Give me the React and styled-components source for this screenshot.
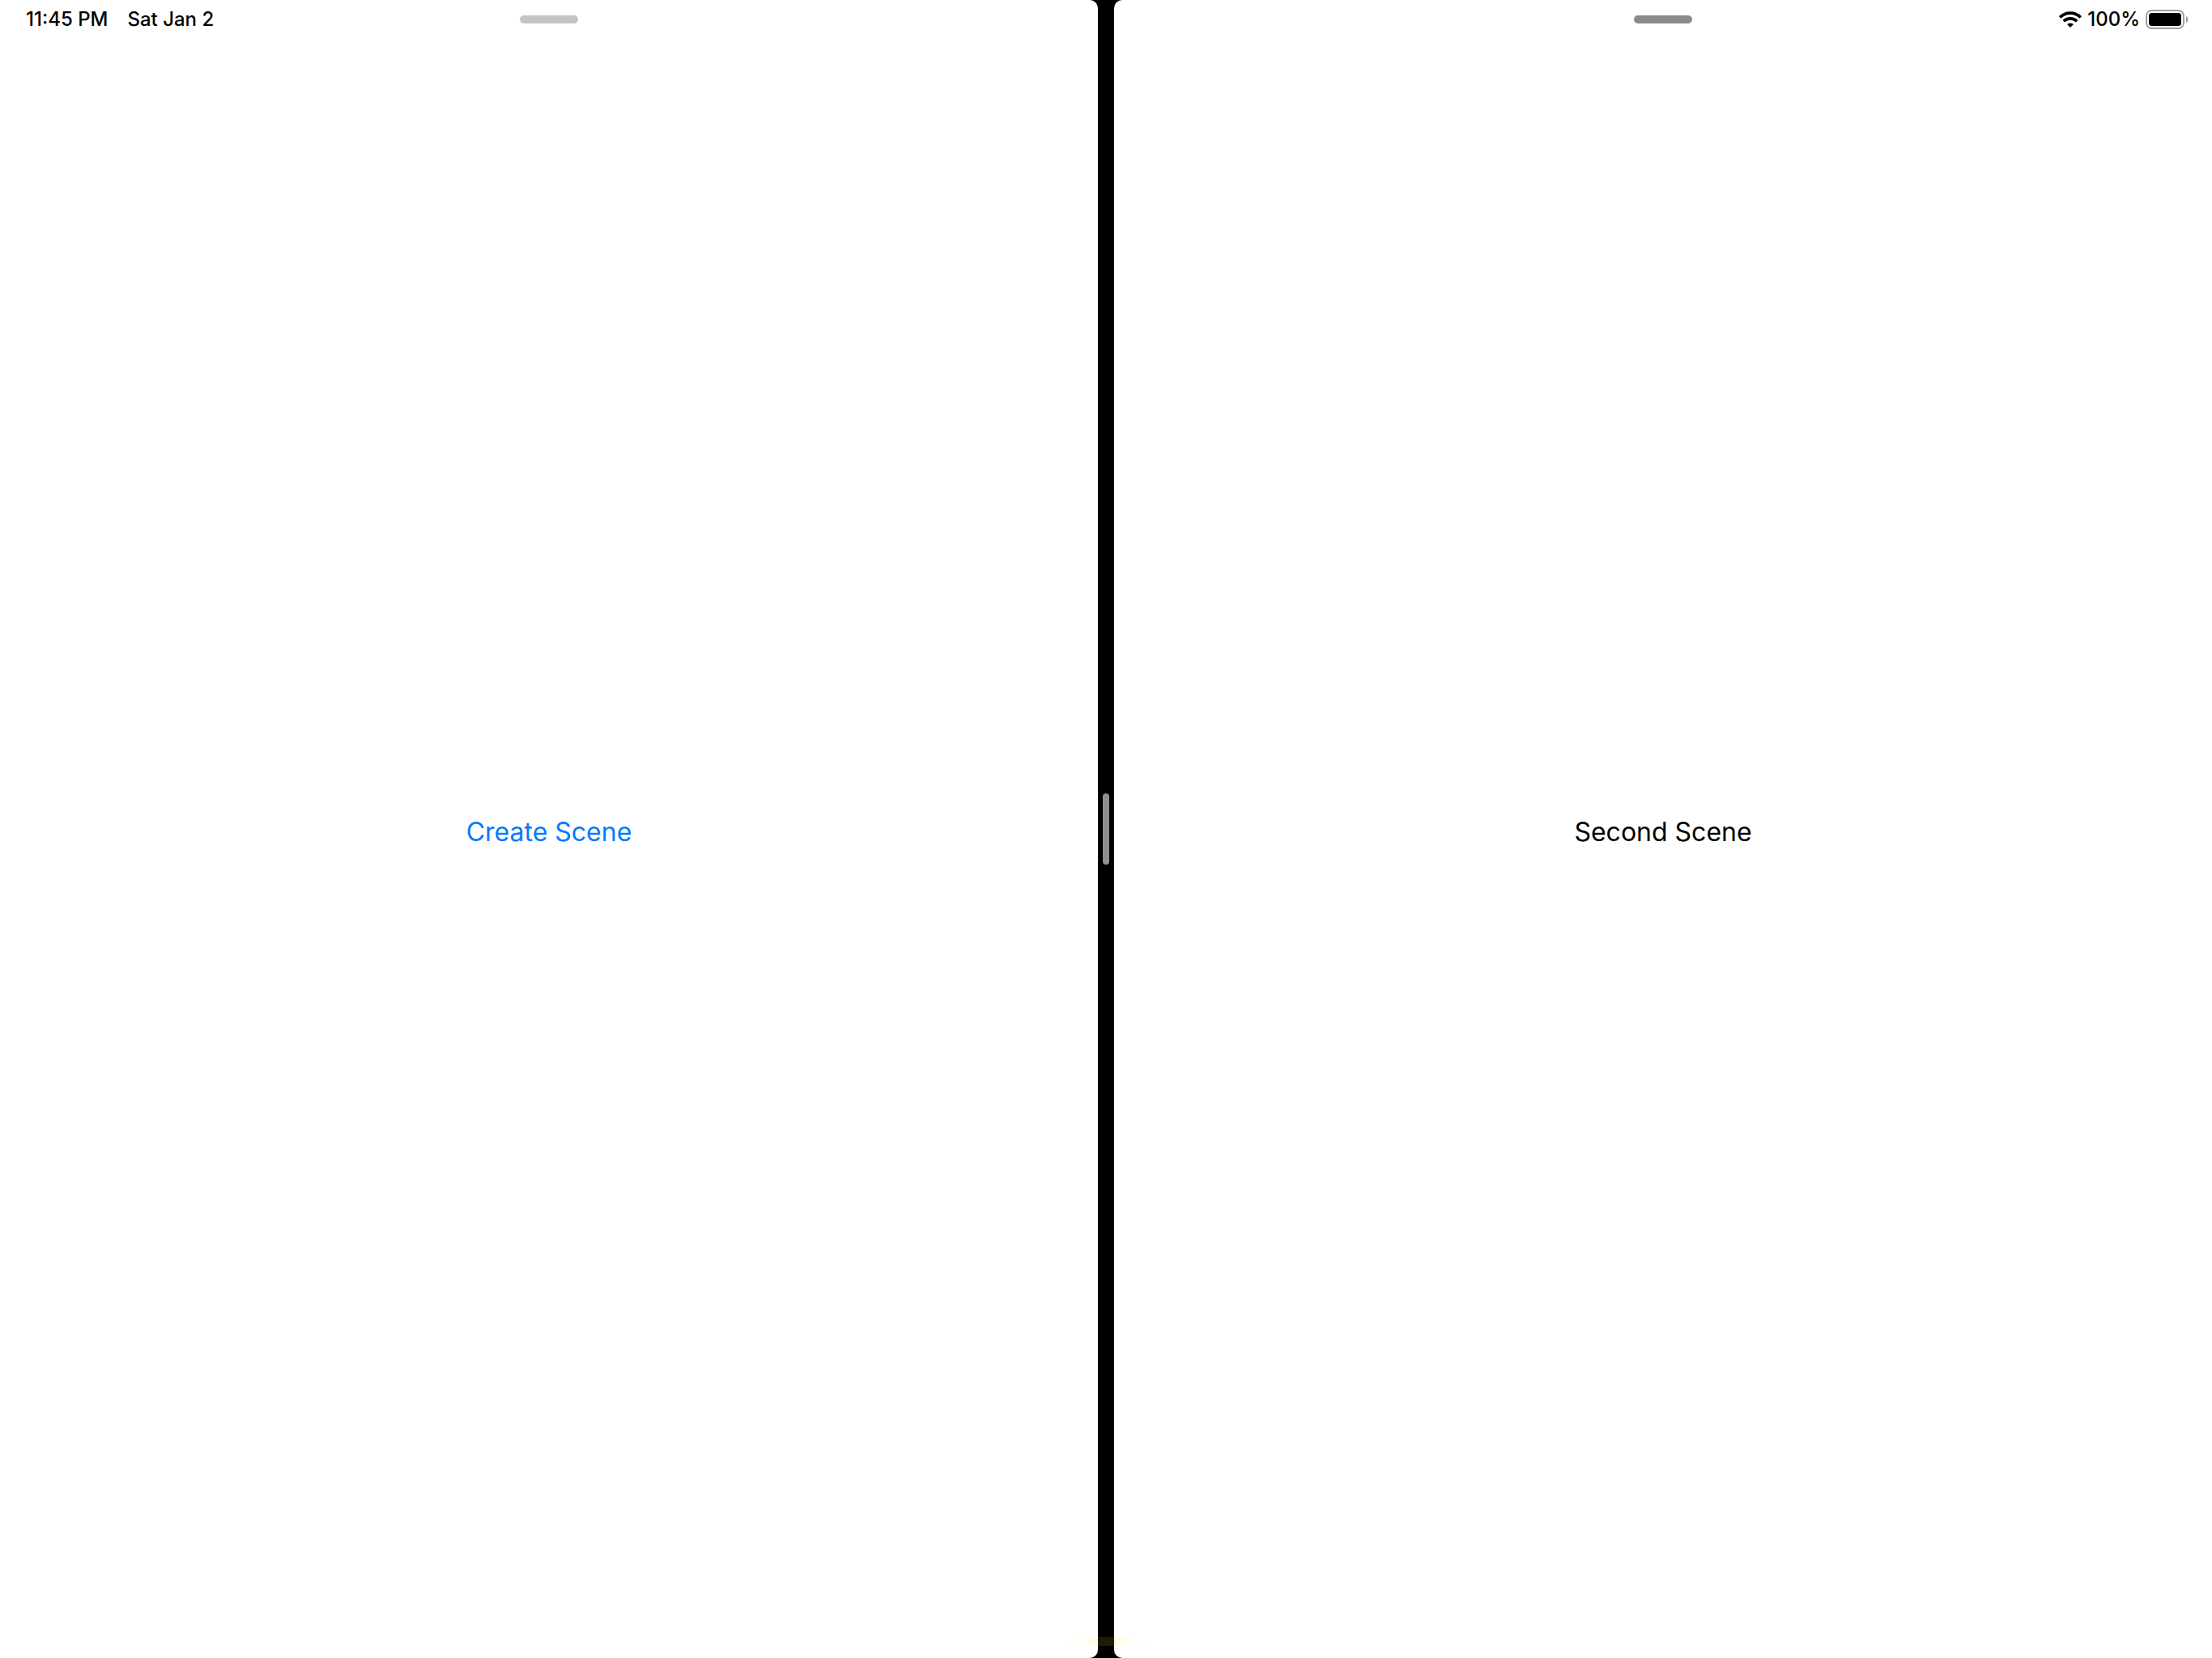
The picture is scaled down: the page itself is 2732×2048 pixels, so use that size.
import React from "react";
import styled, { createGlobalStyle } from "styled-components";

const GlobalStyle = createGlobalStyle`
  * { box-sizing: border-box; }
  body {
    margin: 0;
    background: #000;
    color: #000;
    font-family: Inter, "Liberation Sans", sans-serif;
  }
`;

/* The black behind the scenes shows at their rounded corners. */
const SplitView = styled.div`
  position: relative;
  display: flex;
  min-height: 100vh;
  background: #000;
`;

const Scene = styled.section`
  flex: 1;
  display: grid;
  grid-template-rows: 48px 1fr;
  padding-bottom: 40px;
  background: #fff;
  border-radius: ${({ $side }) => ($side === "left" ? "0 10px 10px 0" : "10px 0 0 10px")};
`;

const StatusBar = styled.header`
  display: grid;
  grid-template-columns: 1fr auto 1fr;
  align-items: center;
  padding: ${({ $side }) => ($side === "left" ? "0 32px" : "0 28px")};
  font-size: 24px;
  line-height: 28px;
  font-weight: 500;
`;

const Clock = styled.div`
  display: flex;
  gap: 24px;
  white-space: nowrap;
`;

const Indicators = styled.div`
  grid-column: 3;
  justify-self: end;
  display: flex;
  align-items: center;
  gap: 7px;
`;

const Grabber = styled.div`
  grid-column: 2;
  width: 72px;
  height: 10px;
  border-radius: 5px;
  background: ${({ $active }) => ($active ? "#8a8a8e" : "#c4c4c5")};
`;

const Content = styled.div`
  display: flex;
  align-items: center;
  justify-content: center;
  font-size: 32px;
  line-height: 40px;
`;

const LinkButton = styled.button`
  padding: 0;
  border: 0;
  background: none;
  color: #007aff;
  font: inherit;
  cursor: pointer;
`;

const Label = styled.p`
  margin: 0;
`;

const Divider = styled.div`
  width: 20px;
  display: flex;
  align-items: center;
  justify-content: center;
`;

const DividerHandle = styled.div`
  width: 8px;
  height: 88px;
  border-radius: 4px;
  background: #8e8e93;
`;

const HomeGlow = styled.div`
  position: absolute;
  left: 50%;
  bottom: 15px;
  width: 120px;
  height: 11px;
  transform: translateX(-50%);
  background: linear-gradient(
    90deg,
    rgba(255, 240, 0, 0),
    rgba(255, 240, 0, 0.02) 20%,
    rgba(255, 240, 0, 0.12) 42%,
    rgba(255, 240, 0, 0.12) 58%,
    rgba(255, 240, 0, 0.02) 80%,
    rgba(255, 240, 0, 0)
  );
  pointer-events: none;
`;

const WifiIcon = () => (
  <svg width="28" height="20" viewBox="0 0 28 20" role="img" aria-label="Wi-Fi">
    <g fill="none" stroke="#000" strokeWidth="3.8">
      <path d="M1.2 7.4A18.2 18.2 0 0 1 26.8 7.4" />
      <path d="M5.8 12.2A11.6 11.6 0 0 1 22.2 12.2" />
    </g>
    <path d="M14 20L10 16A6 6 0 0 1 18 16Z" />
  </svg>
);

const BatteryIcon = () => (
  <svg width="54" height="24" viewBox="0 0 54 24" role="img" aria-label="Battery full">
    <rect x="1" y="1" width="46" height="22" rx="6.5" fill="none" stroke="#a0a0a0" strokeWidth="2" />
    <rect x="4" y="4" width="40" height="16" rx="3.5" />
    <path d="M50 8C53.3 9.2 53.3 14.8 50 16Z" fill="#a0a0a0" />
  </svg>
);

export default function App() {
  return (
    <>
      <GlobalStyle />
      <SplitView>
        <Scene $side="left">
          <StatusBar $side="left">
            <Clock>
              <time>11:45 PM</time>
              <span>Sat Jan 2</span>
            </Clock>
            <Grabber />
          </StatusBar>
          <Content>
            <LinkButton type="button">Create Scene</LinkButton>
          </Content>
        </Scene>
        <Divider>
          <DividerHandle />
        </Divider>
        <Scene $side="right">
          <StatusBar $side="right">
            <Grabber $active />
            <Indicators>
              <WifiIcon />
              <span>100%</span>
              <BatteryIcon />
            </Indicators>
          </StatusBar>
          <Content>
            <Label>Second Scene</Label>
          </Content>
        </Scene>
        <HomeGlow />
      </SplitView>
    </>
  );
}
